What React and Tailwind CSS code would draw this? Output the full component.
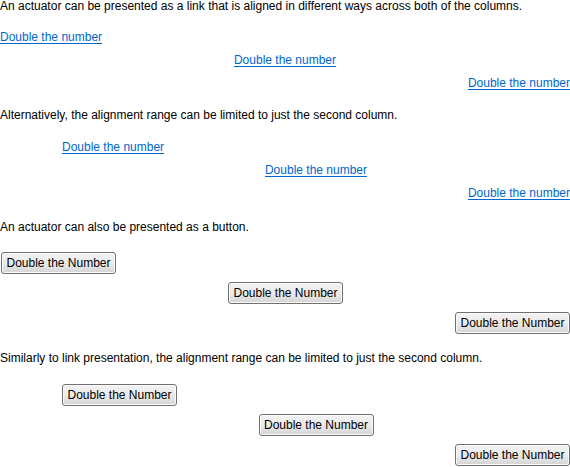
import React from "react";

const font = "font-['Liberation_Sans','Arial',sans-serif]";

function LinkRow({ align }) {
  return (
    <div className={`flex h-[23px] items-center ${align}`}>
      <a href="#" className="text-[#0066cc] underline underline-offset-[2px] leading-[14px]">
        Double the number
      </a>
    </div>
  );
}

function ButtonRow({ align }) {
  return (
    <div className={`flex h-[30px] items-center ${align}`}>
      <button className="w-[115px] h-[22px] rounded-[3px] border border-[#707070] bg-gradient-to-b from-[#f2f2f2] via-[#ebebeb] to-[#d4d4d4] text-[12px] text-black leading-[14px] shadow-[inset_0_0_0_1px_#fbfbfb]">
        Double the Number
      </button>
    </div>
  );
}

function Note({ children, className = "" }) {
  return <p className={`h-[16px] leading-[16px] ${className}`}>{children}</p>;
}

export default function App() {
  return (
    <div className={`w-[570px] h-[467px] overflow-hidden bg-white text-[12px] text-black ${font}`}>
      <Note className="-mt-[2px]">
        An actuator can be presented as a link that is aligned in different ways across both of the columns.
      </Note>
      <div className="mt-[11px]">
        <LinkRow align="justify-start" />
        <LinkRow align="justify-center" />
        <LinkRow align="justify-end" />
      </div>

      <Note className="mt-[13px]">
        Alternatively, the alignment range can be limited to just the second column.
      </Note>
      <div className="mt-[12px] pl-[62px]">
        <LinkRow align="justify-start" />
        <LinkRow align="justify-center" />
        <LinkRow align="justify-end" />
      </div>

      <Note className="mt-[15px]">An actuator can also be presented as a button.</Note>
      <div className="mt-[13px] pl-[1px]">
        <ButtonRow align="justify-start" />
        <ButtonRow align="justify-center" />
        <ButtonRow align="justify-end" />
      </div>

      <Note className="mt-[12px]">
        Similarly to link presentation, the alignment range can be limited to just the second column.
      </Note>
      <div className="mt-[14px] pl-[62px]">
        <ButtonRow align="justify-start" />
        <ButtonRow align="justify-center" />
        <ButtonRow align="justify-end" />
      </div>
    </div>
  );
}
